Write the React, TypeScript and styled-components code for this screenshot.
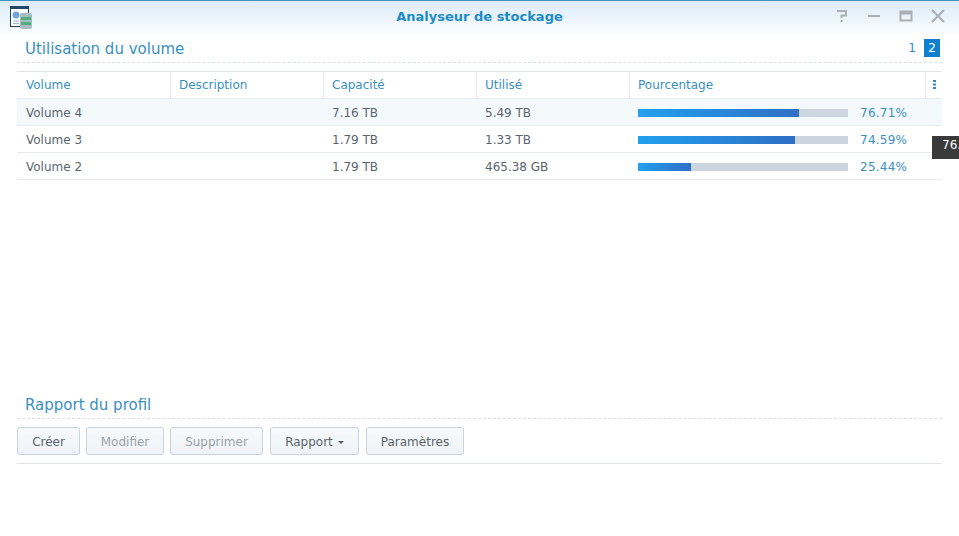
import React from "react";
import styled, { createGlobalStyle } from "styled-components";

const Global = createGlobalStyle`
  html, body { margin: 0; padding: 0; background: #fff; overflow: hidden; }
  body { font-family: "DejaVu Sans", Verdana, sans-serif; }
  #root { width: 959px; height: 536px; }
`;

const Page = styled.div`
  position: relative;
  width: 959px;
  height: 536px;
  overflow: hidden;
  background: linear-gradient(#dcecf9, #f1f7fc 24px, #fff 38px) no-repeat;
  display: flex;
  flex-direction: column;
`;
const TitleBar = styled.header`
  flex: none;
  height: 31px;
  box-sizing: border-box;
  border-top: 1px solid #3f94c4;
  padding: 0 13px 0 9px;
  display: flex;
  align-items: center;
`;
const AppIcon = styled.svg`
  flex: none;
  width: 24px;
  height: 25px;
  margin-top: 2px;
`;
const Title = styled.div`
  flex: 1;
  text-align: center;
  font-size: 13px;
  font-weight: 700;
  color: #1d8cc6;
  padding-left: 92px;
  margin-top: 1px;
`;
const WinButtons = styled.div`
  display: flex;
  gap: 16px;
  margin-top: -1px;
`;
const WinIcon = styled.svg`
  display: block;
  width: 16px;
  height: 16px;
  fill: none;
  stroke: #a9afb5;
  stroke-width: 2;
`;
const Body = styled.main`
  padding: 0 17px;
  display: flex;
  flex-direction: column;
  width: 925px;
`;
const SectionHead = styled.div<{ $top: number }>`
  display: flex;
  align-items: center;
  justify-content: space-between;
  height: 31px;
  margin-top: ${(p) => p.$top}px;
  padding-left: 8px;
  border-bottom: 1px dashed #d8dee2;
`;
const Heading = styled.h2`
  margin: 4px 0 0;
  font-size: 15px;
  font-weight: 400;
  color: #3a8fc0;
`;
const Pager = styled.div`
  display: flex;
  gap: 4px;
  margin-right: 2px;
  margin-top: 2px;
`;
const PageNum = styled.span<{ $on?: boolean }>`
  width: 16px;
  height: 18px;
  line-height: 18px;
  text-align: center;
  font-size: 12px;
  color: ${(p) => (p.$on ? "#fff" : "#2a8ec4")};
  background: ${(p) => (p.$on ? "#0f7fd0" : "transparent")};
`;
const HeaderRow = styled.div`
  margin-top: 8px;
  display: grid;
  grid-template-columns: 154px 153px 153px 153px 296px 16px;
  height: 28px;
  box-sizing: border-box;
  border-top: 1px solid #dfe3e6;
  border-bottom: 1px solid #e6eaed;
`;
const HeadCell = styled.div<{ $last?: boolean }>`
  box-sizing: border-box;
  display: flex;
  align-items: center;
  padding-left: 8px;
  padding-bottom: 1px;
  font-size: 12px;
  color: #3a8fc0;
  border-right: ${(p) => (p.$last ? "none" : "1px solid #e6eaed")};
  &:first-child {
    padding-left: 9px;
  }
`;
const Dots = styled.svg`
  display: block;
  margin-left: -1px;
  width: 3px;
  height: 9px;
  fill: #2d8bbd;
`;
const Row = styled.div<{ $selected?: boolean }>`
  display: grid;
  grid-template-columns: 153px 153px 153px 153px 313px;
  height: 27px;
  box-sizing: border-box;
  border-bottom: 1px solid #e6eaed;
  background: ${(p) => (p.$selected ? "#f4f9fc" : "#fff")};
`;
const Cell = styled.div`
  display: flex;
  align-items: center;
  padding: 2px 0 0 9px;
  font-size: 12px;
  color: #5a646c;
`;
const BarCell = styled(Cell)`
  gap: 12px;
`;
const Track = styled.div`
  width: 210px;
  height: 8px;
  background: #ccd5de;
`;
const Fill = styled.div`
  height: 100%;
  background: linear-gradient(90deg, #22a0ee, #2f6fc6);
`;
const Percent = styled.span`
  font-size: 12px;
  letter-spacing: 0.25px;
  color: #3a8fc0;
`;
const Toolbar = styled.div`
  display: flex;
  gap: 6px;
  padding: 8px 0;
  height: 28px;
  border-bottom: 1px solid #dfe3e6;
`;
const Button = styled.button<{ $w: number; $off?: boolean; $spaced?: boolean }>`
  box-sizing: border-box;
  width: ${(p) => p.$w}px;
  height: 28px;
  padding: 1px 0 0;
  margin-left: ${(p) => (p.$spaced ? "1px" : "0")};
  border: 1px solid #c9d3dc;
  border-radius: 3px;
  background: linear-gradient(#f8fafc, #eef3f7);
  font-family: inherit;
  font-size: 12px;
  color: ${(p) => (p.$off ? "#9aa3ab" : "#5a646c")};
`;
const Caret = styled.span`
  display: inline-block;
  margin-left: 5px;
  vertical-align: 2px;
  border-left: 3px solid transparent;
  border-right: 3px solid transparent;
  border-top: 3px solid #4f5962;
`;
const Tooltip = styled.div`
  position: absolute;
  left: 932px;
  top: 136px;
  width: 60px;
  height: 23px;
  padding-left: 10px;
  line-height: 19px;
  background: #3a3a3a;
  color: #fff;
  font-size: 12px;
`;

const rows = [
  { name: "Volume 4", cap: "7.16 TB", used: "5.49 TB", pct: 76.71, selected: true },
  { name: "Volume 3", cap: "1.79 TB", used: "1.33 TB", pct: 74.59 },
  { name: "Volume 2", cap: "1.79 TB", used: "465.38 GB", pct: 25.44 },
];

export default function App() {
  return (
    <Page>
      <Global />
      <TitleBar>
        <AppIcon viewBox="0 0 24 25">
          <rect x="1.500" y="1.500" width="18" height="20" fill="#fff" stroke="#1f3f63" />
          <rect x="1" y="1" width="19" height="3" fill="#23466e" />
          <circle cx="7" cy="10" r="3.500" fill="#6da6d8" />
          <path d="M4 16h6M4 18.500h6" stroke="#9db4c8" />
          <rect x="11" y="8" width="12" height="16" rx="2" fill="#a9bcc4" />
          <rect x="12" y="12" width="10" height="3" fill="#4fae7e" />
          <rect x="12" y="17" width="10" height="3" fill="#4fae7e" />
        </AppIcon>
        <Title>Analyseur de stockage</Title>
        <WinButtons>
          <WinIcon viewBox="0 0 16 16">
            <path d="M3 3h9v4.500H7.500v2.500M7.500 12v2" />
          </WinIcon>
          <WinIcon viewBox="0 0 16 16">
            <path d="M2 8h12" />
          </WinIcon>
          <WinIcon viewBox="0 0 16 16">
            <path d="M2.500 3.500h11v9h-11zM2.500 5.500h11" />
          </WinIcon>
          <WinIcon viewBox="0 0 16 16">
            <path d="M2 2l12 12M14 2L2 14" />
          </WinIcon>
        </WinButtons>
      </TitleBar>
      <Body>
        <SectionHead $top={0}>
          <Heading>Utilisation du volume</Heading>
          <Pager>
            <PageNum>1</PageNum>
            <PageNum $on>2</PageNum>
          </Pager>
        </SectionHead>
        <HeaderRow>
          <HeadCell>Volume</HeadCell>
          <HeadCell>Description</HeadCell>
          <HeadCell>Capacité</HeadCell>
          <HeadCell>Utilisé</HeadCell>
          <HeadCell>Pourcentage</HeadCell>
          <HeadCell $last>
            <Dots viewBox="0 0 3 9">
              <rect width="3" height="2" />
              <rect y="3.500" width="3" height="2" />
              <rect y="7" width="3" height="2" />
            </Dots>
          </HeadCell>
        </HeaderRow>
        {rows.map((r) => (
          <Row key={r.name} $selected={r.selected}>
            <Cell>{r.name}</Cell>
            <Cell />
            <Cell>{r.cap}</Cell>
            <Cell>{r.used}</Cell>
            <BarCell>
              <Track>
                <Fill style={{ width: `${r.pct}%` }} />
              </Track>
              <Percent>{r.pct.toFixed(2)}%</Percent>
            </BarCell>
          </Row>
        ))}
        <SectionHead $top={207}>
          <Heading>Rapport du profil</Heading>
        </SectionHead>
        <Toolbar>
          <Button $w={63}>Créer</Button>
          <Button $w={78} $off>Modifier</Button>
          <Button $w={93} $off>Supprimer</Button>
          <Button $w={89} $spaced>Rapport<Caret /></Button>
          <Button $w={98} $spaced>Paramètres</Button>
        </Toolbar>
      </Body>
      <Tooltip>76.71%</Tooltip>
    </Page>
  );
}
